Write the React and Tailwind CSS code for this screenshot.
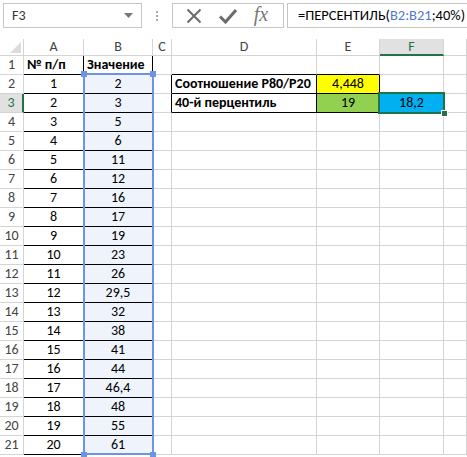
import React from "react";

const COLS = ["A", "B", "C", "D", "E", "F", "G"];
const VALUES = ["2", "3", "5", "6", "11", "12", "16", "17", "19", "23", "26", "29,5", "32", "38", "41", "44", "46,4", "48", "55", "61"];

function Cell({ children, className = "" }) {
  return (
    <div className={"border-r border-b border-[#d4d4d4] flex items-center overflow-visible whitespace-nowrap text-[14px] leading-none text-black " + className}>
      {children}
    </div>
  );
}

export default function App() {
  const rows = [];
  for (let r = 1; r <= 21; r++) {
    const sel = r === 3;
    rows.push(
      <div
        key={"h" + r}
        className={
          "flex items-center justify-center text-[14px] leading-none border-b border-[#d4d4d4] " +
          (sel ? "bg-[#e1e1e1] text-[#217346] border-r-2 border-r-[#217346]" : "text-[#444] border-r border-r-[#d4d4d4]")
        }
      >
        {r}
      </div>
    );
    rows.push(
      <Cell key={"a" + r} className={"border-r-black border-b-black " + (r === 1 ? "font-bold pl-[3px]" : "justify-center")}>
        {r === 1 ? "№ п/п" : r - 1}
      </Cell>
    );
    rows.push(
      <Cell key={"b" + r} className={"border-r-black border-b-black " + (r === 1 ? "font-bold pl-[3px]" : "justify-center bg-[#eef3fc]")}>
        {r === 1 ? "Значение" : VALUES[r - 2]}
      </Cell>
    );
    rows.push(<Cell key={"c" + r} className={r === 2 || r === 3 ? "border-r-black" : ""} />);
    rows.push(
      <Cell
        key={"d" + r}
        className={
          (r === 1 ? "border-b-black " : "") +
          (r === 2 || r === 3 ? "border-r-black border-b-black font-bold pl-[3px]" : "")
        }
      >
        {r === 2 ? "Соотношение Р80/Р20" : r === 3 ? "40-й перцентиль" : ""}
      </Cell>
    );
    rows.push(
      <Cell
        key={"e" + r}
        className={
          (r === 1 ? "border-b-black " : "") +
          (r === 2 ? "border-r-black border-b-black justify-center bg-[#ffff00]" : "") +
          (r === 3 ? "border-r-black border-b-black justify-center bg-[#92d050]" : "")
        }
      >
        {r === 2 ? "4,448" : r === 3 ? "19" : ""}
      </Cell>
    );
    rows.push(
      <Cell key={"f" + r} className={r === 3 ? "justify-center bg-[#00b0f0]" : ""}>
        {r === 3 ? "18,2" : ""}
      </Cell>
    );
    rows.push(<Cell key={"g" + r} />);
  }

  return (
    <div
      className="relative w-[467px] h-[457px] overflow-hidden bg-white"
      style={{ fontFamily: "Carlito, Calibri, 'Noto Sans', sans-serif" }}
    >
      {/* Formula bar */}
      <div className="h-[39px] flex items-start pt-[3px]">
        <div className="ml-[3px] w-[139px] h-[25px] border border-[#c6c6c6] flex items-center justify-between pl-[8px] pr-[8px] text-[14px] text-[#333]">
          <span>F3</span>
          <svg width="9" height="5" viewBox="0 0 9 5">
            <path d="M0 0 H9 L4.5 5 Z" fill="#777" />
          </svg>
        </div>
        <div className="w-[30px] h-[25px] flex flex-col items-center justify-center gap-[2px]">
          <span className="w-[2px] h-[2px] bg-[#aaa]" />
          <span className="w-[2px] h-[2px] bg-[#aaa]" />
          <span className="w-[2px] h-[2px] bg-[#aaa]" />
        </div>
        <div className="w-[112px] h-[25px] border border-[#c6c6c6] flex items-center">
          <div className="w-[42px] flex justify-center">
            <svg width="16" height="16" viewBox="0 0 16 16">
              <path d="M1.5 1.5 L14.5 14.5 M14.5 1.5 L1.5 14.5" stroke="#6b6b6b" strokeWidth="2" />
            </svg>
          </div>
          <div className="w-[26px] flex justify-center">
            <svg width="18" height="16" viewBox="0 0 18 16">
              <path d="M1 8.5 L6.5 14 L17 2" stroke="#6b6b6b" strokeWidth="3" fill="none" />
            </svg>
          </div>
          <div
            className="w-[40px] flex justify-center text-[20px] italic text-[#777] leading-none pb-[3px]"
            style={{ fontFamily: "'Liberation Serif', serif" }}
          >
            fx
          </div>
        </div>
        <div className="ml-[3px] flex-1 h-[25px] border border-[#c6c6c6] border-r-0 flex items-center pl-[10px] text-[14.5px] text-black whitespace-nowrap">
          =ПЕРСЕНТИЛЬ(<span className="text-[#4f77d6]">B2:B21</span>;40%)
        </div>
      </div>

      {/* Grid */}
      <div className="relative grid grid-cols-[24px_60px_69px_19px_145px_63px_64px_1fr] grid-rows-[17px_repeat(21,19px)]">
        <div className="border-r border-b border-[#d4d4d4] relative">
          <svg className="absolute right-[2px] bottom-[2px]" width="11" height="11" viewBox="0 0 11 11">
            <path d="M11 0 V11 H0 Z" fill="#dcdcdc" />
          </svg>
        </div>
        {COLS.map((c) => (
          <div
            key={c}
            className={
              "flex items-center justify-center text-[14px] leading-none border-r border-[#d4d4d4] " +
              (c === "F" ? "bg-[#e1e1e1] text-[#217346] border-b-2 border-b-[#217346]" : "text-[#444] border-b border-b-[#d4d4d4]")
            }
          >
            {c === "G" ? "" : c}
          </div>
        ))}
        {rows}

        {/* B2:B21 reference highlight */}
        <div className="absolute left-[83px] top-[34px] w-[71px] h-[382px] border-2 border-[#6d93e6] pointer-events-none" />
        <div className="absolute left-[81px] top-[32px] w-[6px] h-[6px] bg-[#6d93e6]" />
        <div className="absolute left-[150px] top-[32px] w-[6px] h-[6px] bg-[#6d93e6]" />
        <div className="absolute left-[81px] top-[413px] w-[6px] h-[6px] bg-[#6d93e6]" />
        <div className="absolute left-[150px] top-[413px] w-[6px] h-[6px] bg-[#6d93e6]" />

        {/* F3 selection */}
        <div className="absolute left-[378px] top-[53px] w-[67px] h-[22px] border-2 border-[#217346] pointer-events-none" />
        <div className="absolute left-[441px] top-[71px] w-[7px] h-[7px] bg-[#217346] border border-white" />
      </div>
    </div>
  );
}
